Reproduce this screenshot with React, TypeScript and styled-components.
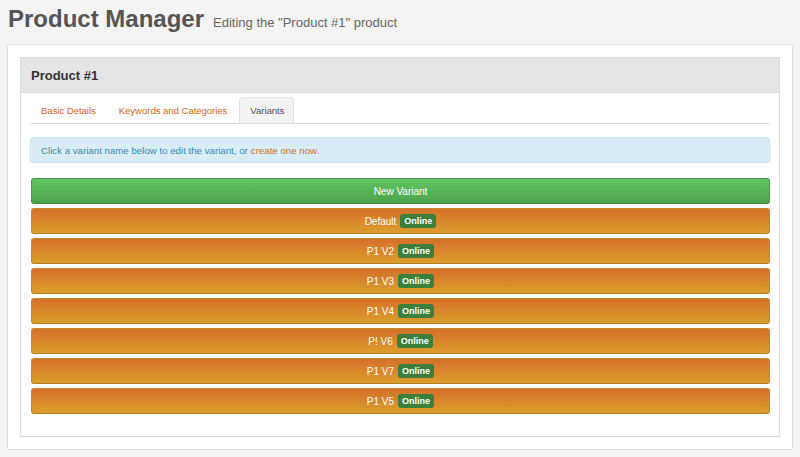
import styled, { createGlobalStyle } from "styled-components";

const GlobalStyle = createGlobalStyle`
  html, body {
    margin: 0;
    padding: 0;
    background: #f4f4f4;
    font-family: "Liberation Sans", Arial, sans-serif;
  }
`;

// Page header
const PageHeader = styled.header`
  height: 44px;
  box-sizing: border-box;
  padding: 4px 8px 0;
  display: flex;
  align-items: baseline;
  gap: 9px;
`;

const Title = styled.h1`
  margin: 0;
  font-size: 24px;
  line-height: 30px;
  font-weight: 700;
  color: #555;
`;

const Subtitle = styled.small`
  font-size: 13px;
  color: #666;
`;

const Well = styled.div`
  margin: 0 7px;
  height: 406px;
  box-sizing: border-box;
  padding: 12px;
  background: #fff;
  border: 1px solid #dedede;
  border-radius: 2px;
`;

const Panel = styled.section`
  border: 1px solid #dddddd;
  background: #fff;
  height: 380px;
  box-sizing: border-box;
`;

const PanelHeading = styled.div`
  height: 34px;
  background: #e5e5e5;
  border-bottom: 1px solid #dadada;
  display: flex;
  align-items: center;
  padding: 0 10px;
  font-size: 13px;
  font-weight: 700;
  color: #333;
`;

const PanelBody = styled.div`
  padding: 4px 9px 0;
`;

const Tabs = styled.ul`
  list-style: none;
  margin: 0;
  padding: 0;
  display: flex;
  border-bottom: 1px solid #dddddd;
  height: 26px;
`;

const Tab = styled.li<{ $active?: boolean }>`
  margin-right: 2px;
  margin-bottom: -1px;
  padding: 0 9px 0 10px;
  height: 26px;
  box-sizing: border-box;
  display: flex;
  align-items: center;
  font-size: 9.7px;
  letter-spacing: -0.1px;
  color: ${(p) => (p.$active ? "#555" : "#d2691e")};
  background: ${(p) => (p.$active ? "#f3f3f3" : "transparent")};
  border: 1px solid ${(p) => (p.$active ? "#e2e2e2" : "transparent")};
  border-bottom-color: ${(p) => (p.$active ? "#f3f3f3" : "transparent")};
  border-radius: 4px 4px 0 0;
`;

const Alert = styled.div`
  margin-top: 13px;
  height: 26px;
  box-sizing: border-box;
  padding: 0 10px;
  display: flex;
  align-items: center;
  background: #d9edf7;
  border: 1px solid #c8e6f3;
  border-radius: 3px;
  color: #3a87ad;
  font-size: 9.7px;
`;

const AlertLink = styled.a`
  color: #d2691e;
  text-decoration: none;
  margin-left: 3px;
`;

const ButtonList = styled.div`
  margin-top: 15px;
  display: flex;
  flex-direction: column;
  gap: 4px;
  padding-left: 1px;
`;

const VariantButton = styled.button<{ $tone: "success" | "warning" }>`
  height: 26px;
  width: 100%;
  border: 1px solid
    ${(p) => (p.$tone === "success" ? "#4a9a4a" : "#c58a2c")};
  border-bottom-color: ${(p) =>
    p.$tone === "success" ? "#3f8a3f" : "#b47e26"};
  border-radius: 3px;
  background: ${(p) =>
    p.$tone === "success"
      ? "linear-gradient(#62c462, #4fa34f)"
      : "linear-gradient(#d6702a, #da9e2c)"};
  color: #fff;
  font-family: "Liberation Sans", Arial, sans-serif;
  font-size: 10px;
  display: flex;
  align-items: center;
  justify-content: center;
  gap: 4px;
  padding: 0;
  cursor: pointer;
`;

const Badge = styled.span`
  background: #3c7f3c;
  color: #fff;
  font-size: 9px;
  font-weight: 700;
  padding: 2px 4px;
  border-radius: 3px;
  line-height: 10px;
`;

const variants = ["Default", "P1 V2", "P1 V3", "P1 V4", "P! V6", "P1 V7", "P1 V5"];

const App = () => {
  return (
    <>
      <GlobalStyle />
      <PageHeader>
        <Title>Product Manager</Title>
        <Subtitle>Editing the "Product #1" product</Subtitle>
      </PageHeader>
      <Well>
        <Panel>
          <PanelHeading>Product #1</PanelHeading>
          <PanelBody>
            <Tabs>
              <Tab>Basic Details</Tab>
              <Tab>Keywords and Categories</Tab>
              <Tab $active>Variants</Tab>
            </Tabs>
            <Alert>
              Click a variant name below to edit the variant, or
              <AlertLink href="#">create one now.</AlertLink>
            </Alert>
            <ButtonList>
              <VariantButton $tone="success">New Variant</VariantButton>
              {variants.map((name) => (
                <VariantButton key={name} $tone="warning">
                  {name}
                  <Badge>Online</Badge>
                </VariantButton>
              ))}
            </ButtonList>
          </PanelBody>
        </Panel>
      </Well>
    </>
  );
};

export default App;
